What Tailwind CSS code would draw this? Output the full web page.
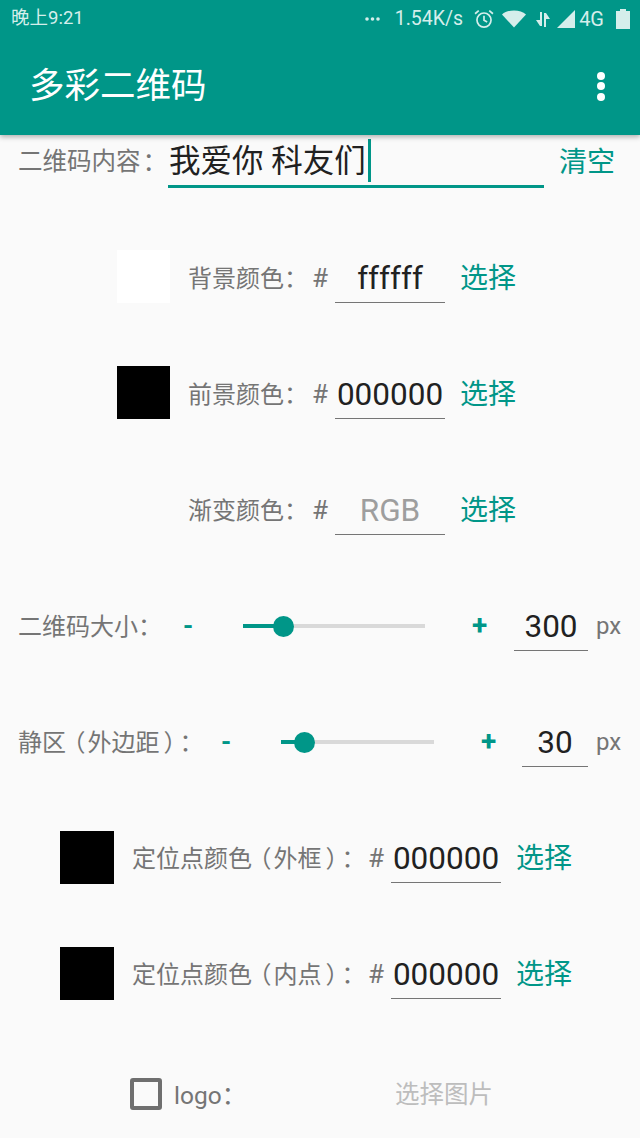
<!DOCTYPE html>
<html lang="zh-CN">
<head>
  <meta charset="UTF-8" />
  <meta name="viewport" content="width=device-width, initial-scale=1.0" />
  <title>多彩二维码</title>
  <script src="https://cdn.jsdelivr.net/npm/@tailwindcss/browser@4"></script>
</head>
<body class="bg-[#fafafa] font-['Roboto','Noto_Sans_CJK_SC',sans-serif]">
<div class="w-[640px] h-[1138px] overflow-hidden flex flex-col">

  <!-- status bar + app bar -->
  <header class="h-[135px] shrink-0 bg-[#009688] shadow-[0_2px_5px_rgba(0,0,0,0.3)] relative z-10 text-white">
    <div class="h-[37px] flex items-center pl-[11px] pr-[10px] text-[#d5eeeb]">
      <span class="text-[18.500px] leading-none">晚上9:21</span>
      <div class="ml-auto flex items-center">
        <svg width="15" height="4" viewBox="0 0 15 4" fill="currentColor"><circle cx="2" cy="2" r="1.8"/><circle cx="7.5" cy="2" r="1.8"/><circle cx="13" cy="2" r="1.8"/></svg>
        <span class="ml-[15px] text-[19.500px] leading-none">1.54K/s</span>
        <svg class="ml-[11px]" width="20" height="20" viewBox="0 0 19 19" fill="none" stroke="currentColor" stroke-width="1.6"><circle cx="9.5" cy="10.5" r="6.7"/><path d="M9.5 6.500v4.200l3 1.600M1 4.500 4.500 1.500M18 4.500l-3.500-3"/></svg>
        <svg class="ml-[8px]" width="24" height="18" viewBox="0 0 24 18" fill="currentColor"><path d="M0 4.500C3 1.800 7 .5 12 .5s9 1.300 12 4L12 17.500z"/></svg>
        <svg class="ml-[9px]" width="16" height="16" viewBox="0 0 16 16" fill="currentColor"><path d="M5 15h2V1H5zM1 9l4 6V9zM9 16h2V2H9zM11 2l4 6h-4z"/></svg>
        <svg class="ml-[6px]" width="18" height="18" viewBox="0 0 18 18" fill="currentColor"><path d="M18 0v18H0z"/></svg>
        <span class="ml-[4px] text-[20px] leading-none">4G</span>
        <svg class="ml-[12px]" width="14" height="20" viewBox="0 0 14 20" fill="currentColor"><path d="M4 0h6v2h4v18H0V2h4z"/></svg>
      </div>
    </div>
    <div class="h-[98px] flex items-center justify-between pl-[29px] pr-[35px]">
      <h1 class="pt-[2px] text-[35.500px] leading-none font-normal">多彩二维码</h1>
      <div class="flex flex-col gap-[2.500px]">
        <span class="w-[8px] h-[8px] rounded-full bg-white"></span>
        <span class="w-[8px] h-[8px] rounded-full bg-white"></span>
        <span class="w-[8px] h-[8px] rounded-full bg-white"></span>
      </div>
    </div>
  </header>

  <main class="flex-1">
    <!-- content row -->
    <div class="h-[85px] flex items-start pl-[18px] pt-[3px]">
      <span class="w-[150px] h-[48px] flex items-center whitespace-nowrap text-[24.500px] text-[#757575]"><span>二维码内<span class="tracking-[-4px]">容</span></span><span class="font-['Noto_Sans_CJK_TC']">：</span></span>
      <div class="w-[376px] h-[50px] border-b-[3px] border-[#009688] flex items-center">
        <span class="pl-[1px] text-[31.500px] leading-none text-[#212121] whitespace-pre">我爱你 科友们</span>
        <span class="w-[3px] h-[43px] mb-[3px] ml-[2px] bg-[#009688]"></span>
      </div>
      <span class="ml-[15px] h-[48px] pt-[1px] flex items-center text-[28px] text-[#009688]">清空</span>
    </div>

    <!-- background colour -->
    <div class="h-[116px] flex items-center pl-[117px]">
      <div class="w-[53px] h-[53px] mb-[3px] bg-white"></div>
      <span class="ml-[18px] w-[124px] whitespace-nowrap text-[24px] text-[#757575]">背景颜色<span class="font-['Noto_Sans_CJK_TC']">：</span></span>
      <span class="w-[23px] text-[26px] text-[#757575]">#</span>
      <div class="w-[110px] h-[50px] pt-[2px] border-b-[1.500px] border-[#757575] flex items-center justify-center text-[31.500px] text-[#212121]">ffffff</div>
      <span class="ml-[15px] pt-[2px] text-[28px] text-[#009688]">选择</span>
    </div>

    <!-- foreground colour -->
    <div class="h-[116px] flex items-center pl-[117px]">
      <div class="w-[53px] h-[53px] mb-[3px] bg-black"></div>
      <span class="ml-[18px] w-[124px] whitespace-nowrap text-[24px] text-[#757575]">前景颜色<span class="font-['Noto_Sans_CJK_TC']">：</span></span>
      <span class="w-[23px] text-[26px] text-[#757575]">#</span>
      <div class="w-[110px] h-[50px] pt-[2px] border-b-[1.500px] border-[#757575] flex items-center justify-center text-[31.500px] text-[#212121]">000000</div>
      <span class="ml-[15px] pt-[2px] text-[28px] text-[#009688]">选择</span>
    </div>

    <!-- gradient colour -->
    <div class="h-[116px] flex items-center pl-[188px]">
      <span class="w-[124px] whitespace-nowrap text-[24px] text-[#757575]">渐变颜色<span class="font-['Noto_Sans_CJK_TC']">：</span></span>
      <span class="w-[23px] text-[26px] text-[#757575]">#</span>
      <div class="w-[110px] h-[50px] pt-[2px] border-b-[1.500px] border-[#757575] flex items-center justify-center text-[31.500px] text-[#9e9e9e]">RGB</div>
      <span class="ml-[15px] pt-[2px] text-[28px] text-[#009688]">选择</span>
    </div>

    <!-- size -->
    <div class="h-[116px] flex items-center pl-[18px]">
      <span class="w-[165px] whitespace-nowrap text-[24px] text-[#757575]">二维码大小<span class="font-['Noto_Sans_CJK_TC']">：</span></span>
      <span class="w-[60px] text-[26px] font-bold text-[#009688]">-</span>
      <div class="relative w-[182px] h-[4px] bg-[#d9d9d9]">
        <div class="w-[40px] h-[4px] bg-[#009688]"></div>
        <div class="absolute left-[30px] top-[-8.500px] w-[21px] h-[21px] rounded-full bg-[#009688]"></div>
      </div>
      <span class="ml-[47px] w-[42px] text-[28px] font-bold text-[#009688]">+</span>
      <div class="w-[74px] h-[50px] pt-[2px] border-b-[1.500px] border-[#757575] flex items-center justify-center text-[31.500px] text-[#212121]">300</div>
      <span class="ml-[8px] text-[24px] text-[#757575]">px</span>
    </div>

    <!-- quiet zone -->
    <div class="h-[116px] flex items-center pl-[18px]">
      <span class="w-[203px] whitespace-nowrap text-[24px] text-[#757575]">静<span class="tracking-[-4.500px]">区</span><span class="tracking-[2px]">（</span>外边距<span class="ml-[4px]">）</span><span class="ml-[4px] font-['Noto_Sans_CJK_TC']">：</span></span>
      <span class="w-[60px] text-[26px] font-bold text-[#009688]">-</span>
      <div class="relative w-[153px] h-[4px] bg-[#d9d9d9]">
        <div class="w-[23px] h-[4px] bg-[#009688]"></div>
        <div class="absolute left-[13px] top-[-8.500px] w-[21px] h-[21px] rounded-full bg-[#009688]"></div>
      </div>
      <span class="ml-[47px] w-[41px] text-[28px] font-bold text-[#009688]">+</span>
      <div class="w-[66px] h-[50px] pt-[2px] border-b-[1.500px] border-[#757575] flex items-center justify-center text-[31.500px] text-[#212121]">30</div>
      <span class="ml-[8px] text-[24px] text-[#757575]">px</span>
    </div>

    <!-- finder outer -->
    <div class="h-[116px] flex items-center pl-[60px]">
      <div class="w-[54px] h-[53px] mb-[1px] bg-black"></div>
      <span class="ml-[18px] w-[236px] whitespace-nowrap text-[24px] text-[#757575]">定位点颜<span class="tracking-[-4.500px]">色</span><span class="tracking-[2px]">（</span>外框<span class="ml-[4px]">）</span><span class="ml-[4px] font-['Noto_Sans_CJK_TC']">：</span></span>
      <span class="w-[23px] text-[26px] text-[#757575]">#</span>
      <div class="w-[110px] h-[50px] pt-[2px] border-b-[1.500px] border-[#757575] flex items-center justify-center text-[31.500px] text-[#212121]">000000</div>
      <span class="ml-[15px] pt-[2px] text-[28px] text-[#009688]">选择</span>
    </div>

    <!-- finder inner -->
    <div class="h-[116px] flex items-center pl-[60px]">
      <div class="w-[54px] h-[53px] mb-[1px] bg-black"></div>
      <span class="ml-[18px] w-[236px] whitespace-nowrap text-[24px] text-[#757575]">定位点颜<span class="tracking-[-4.500px]">色</span><span class="tracking-[2px]">（</span>内点<span class="ml-[4px]">）</span><span class="ml-[4px] font-['Noto_Sans_CJK_TC']">：</span></span>
      <span class="w-[23px] text-[26px] text-[#757575]">#</span>
      <div class="w-[110px] h-[50px] pt-[2px] border-b-[1.500px] border-[#757575] flex items-center justify-center text-[31.500px] text-[#212121]">000000</div>
      <span class="ml-[15px] pt-[2px] text-[28px] text-[#009688]">选择</span>
    </div>

    <!-- logo -->
    <div class="h-[124px] flex items-center pl-[130px]">
      <div class="w-[32px] h-[32px] rounded-[3px] border-[4px] border-[#6f6f6f]"></div>
      <span class="ml-[12px] w-[221px] pt-[2px] whitespace-nowrap text-[24.500px] text-[#757575]">logo<span class="font-['Noto_Sans_CJK_TC']">：</span></span>
      <span class="pt-[2px] text-[24.500px] text-[#bdbdbd]">选择图片</span>
    </div>
  </main>
</div>
</body>
</html>
